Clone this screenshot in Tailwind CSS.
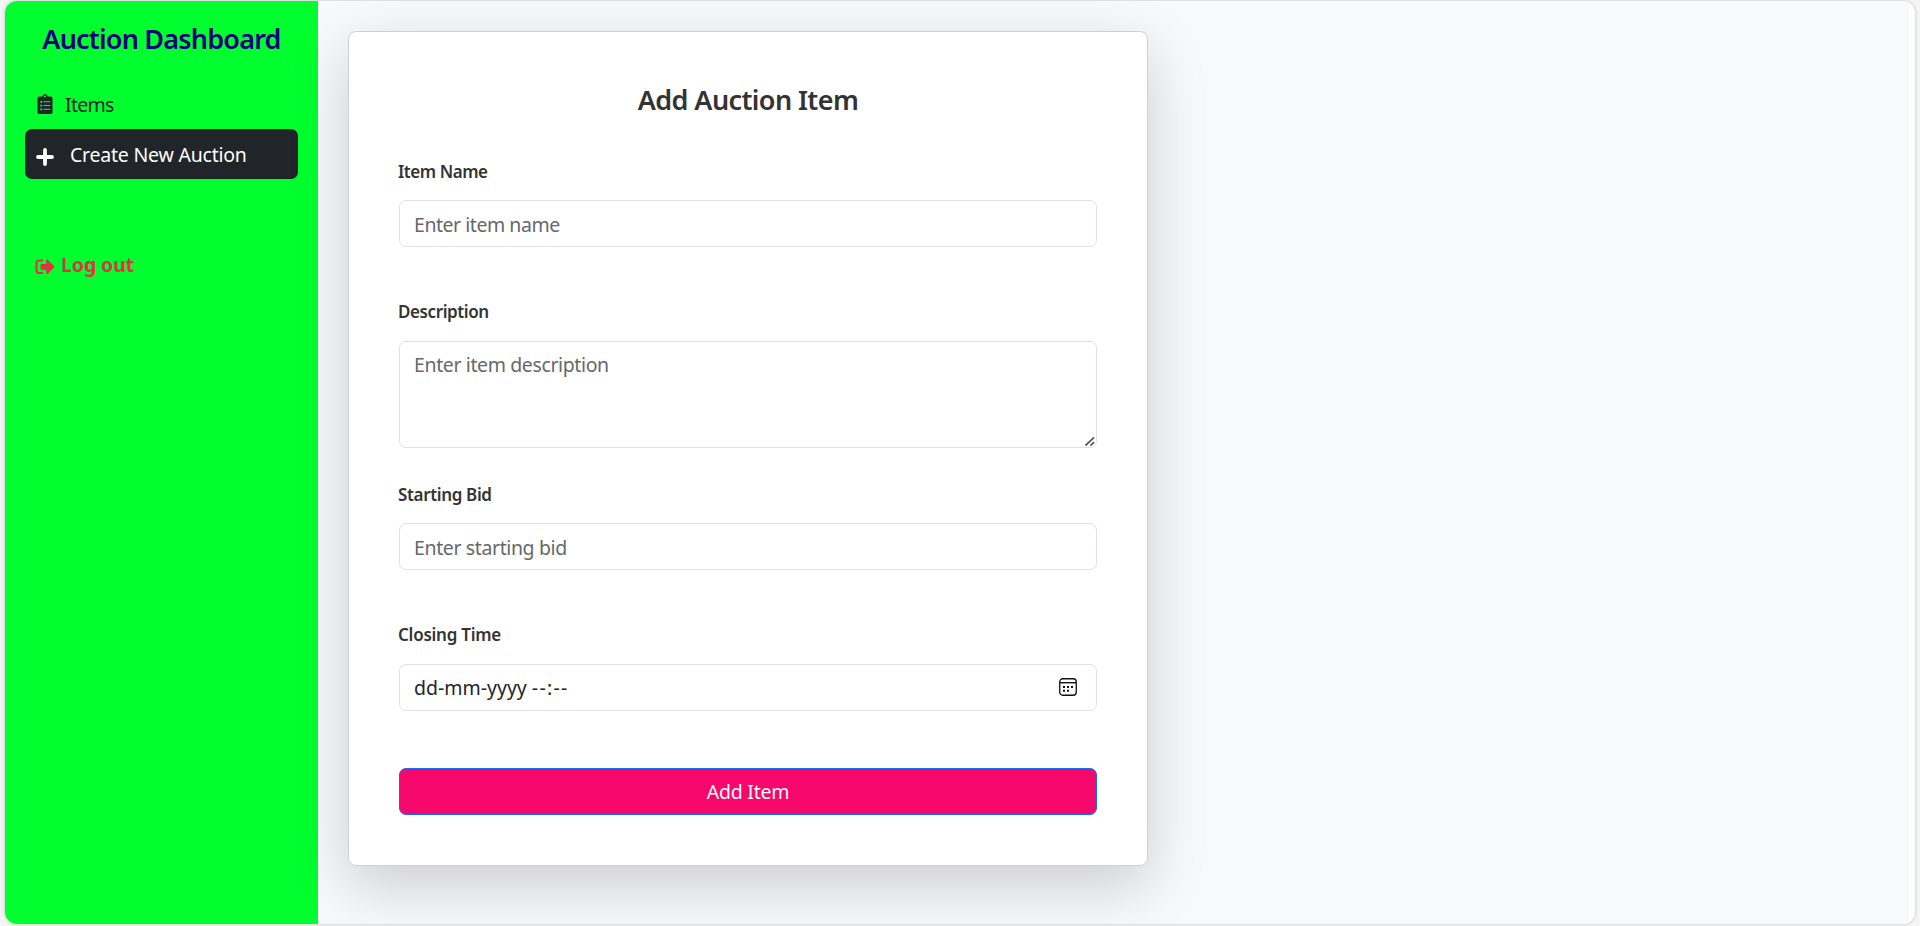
<!DOCTYPE html>
<html lang="en">
<head>
<meta charset="utf-8">
<title>Auction Dashboard</title>
<script src="https://cdn.jsdelivr.net/npm/@tailwindcss/browser@4"></script>
</head>
<body class="h-[926px] overflow-hidden bg-[#f5f5f5] px-[5px] pt-px font-['Noto_Sans','Open_Sans',sans-serif] text-[19.5px] text-[#212529]">
<div class="flex h-[923px] overflow-hidden rounded-[12px] bg-white pr-[6px] shadow-[0_0_3px_1px_rgba(0,0,0,0.13)]">
  <aside class="flex w-[313px] shrink-0 flex-col bg-[#00ff2f] px-5 pt-[18px]">
    <h1 class="mb-5 flex h-10 items-center justify-center whitespace-nowrap text-[27px] font-semibold tracking-[-0.8px] text-[#10007d]">Auction Dashboard</h1>
    <nav class="flex flex-col">
      <a class="flex h-[50px] items-center pl-3">
        <svg class="h-5 w-4" viewBox="0 0 384 512" fill="currentColor"><path d="M336 64h-80c0-35.300-28.700-64-64-64s-64 28.700-64 64H48C21.500 64 0 85.500 0 112v352c0 26.500 21.500 48 48 48h288c26.500 0 48-21.500 48-48V112c0-26.500-21.500-48-48-48z"/><circle cx="192" cy="62" r="24" fill="#00ff2f"/><path fill="#00ff2f" d="M72 176h48v48H72zM152 188h176v26H152zM72 272h48v48H72zM152 284h176v26H152zM72 368h48v48H72zM152 380h176v26H152z"/></svg>
        <span class="ml-3 pt-0.5 tracking-[-0.7px]">Items</span>
      </a>
      <a class="flex h-[50px] items-center rounded-[7px] bg-[#212529] pl-[11px] text-white">
        <svg class="mt-[5px] h-[18px] w-[18px]" viewBox="0 0 18 18" fill="none" stroke="currentColor" stroke-width="3.800" stroke-linecap="round"><path d="M9 2v14M2 9h14"/></svg>
        <span class="ml-4 whitespace-nowrap pt-0.5 tracking-[-0.22px]">Create New Auction</span>
      </a>
    </nav>
    <a class="mt-[60px] flex h-[50px] items-center pl-[10px] font-bold text-[#dc3545]">
      <svg class="mt-[5px] h-5 w-5" viewBox="0 0 20 20"><path d="M7 3.500H4A2.500 2.500 0 0 0 1.500 6v7.500A2.500 2.500 0 0 0 4 16h3" fill="none" stroke="currentColor" stroke-width="2.200" stroke-linecap="round"/><path fill="currentColor" d="M6.500 6.900h4.700V3.700c0-1 1-1.400 1.700-.8l6.200 6.100c.5.500.5 1.100 0 1.600l-6.200 6.100c-.7.600-1.700.2-1.700-.8v-3.200H6.500c-.6 0-1-.4-1-1V7.900c0-.6.4-1 1-1z"/></svg>
      <span class="ml-[6px] pt-0.5 tracking-[-0.1px]">Log out</span>
    </a>
  </aside>
  <main class="flex-1 bg-[#f8f9fb] pl-[30px] pt-[30px]">
    <form class="flex h-[835px] w-[800px] flex-col rounded-[8px] border border-[#ced0d2] bg-white px-[50px] pt-[50px] text-[#333] shadow-[0_20px_60px_rgba(0,0,0,0.175)]">
      <h2 class="flex h-[35px] items-center justify-center pt-0.5 text-[27px] font-semibold tracking-[-0.6px]">Add Auction Item</h2>
      <label class="-ml-px mt-[40px] flex h-[30px] items-center text-[17px] font-semibold tracking-[-0.45px]">Item Name</label>
      <input type="text" placeholder="Enter item name" class="mt-[13px] h-[47px] w-full rounded-[7px] border border-[#dee2e6] px-[14px] pt-px tracking-[-0.46px] placeholder:text-[#65686b]">
      <label class="-ml-px mt-[50px] flex h-[30px] items-center text-[17px] font-semibold tracking-[-0.4px]">Description</label>
      <div class="relative mt-[14px] h-[107px] shrink-0">
        <textarea placeholder="Enter item description" class="block h-full w-full resize-none rounded-[7px] border border-[#dee2e6] px-[14px] pt-[8px] leading-[30px] tracking-[-0.38px] placeholder:text-[#65686b]"></textarea>
        <svg class="absolute bottom-[2px] right-[2px] h-[9px] w-[10px]" viewBox="0 0 10 9" stroke="#505050" stroke-width="1.700"><path d="M.5 8.500 9 .5M5.500 8.500 9 5.200"/></svg>
      </div>
      <label class="-ml-px mt-[32px] flex h-[30px] items-center text-[17px] font-semibold tracking-[-0.35px]">Starting Bid</label>
      <input type="text" placeholder="Enter starting bid" class="mt-[13px] h-[47px] w-full rounded-[7px] border border-[#dee2e6] px-[14px] pt-px tracking-[-0.38px] placeholder:text-[#65686b]">
      <label class="-ml-px mt-[50px] flex h-[30px] items-center text-[17px] font-semibold tracking-[-0.25px]">Closing Time</label>
      <div class="mt-[14px] flex h-[47px] items-center justify-between rounded-[7px] border border-[#dee2e6] pl-[14px] pr-[19px] text-[#212529]">
        <span>dd-mm-yyyy <span class="tracking-[1.3px]">--:--</span></span>
        <svg class="mb-px h-[18px] w-[18px]" viewBox="0 0 18 18" fill="none" stroke="#111"><rect x=".75" y=".75" width="16.500" height="16.500" rx="3" stroke-width="1.300"/><path d="M1 4.700h16" stroke-width="1.400"/><path d="M4 9h2M8 9h2M12 9h2M4 12.800h2M8 12.800h2" stroke-width="2"/></svg>
      </div>
      <button type="button" class="mt-[57px] h-[47px] rounded-[7px] border border-[#0d6efd] bg-[#f5076b] pt-px tracking-[-0.25px] text-white">Add Item</button>
    </form>
  </main>
</div>
</body>
</html>
